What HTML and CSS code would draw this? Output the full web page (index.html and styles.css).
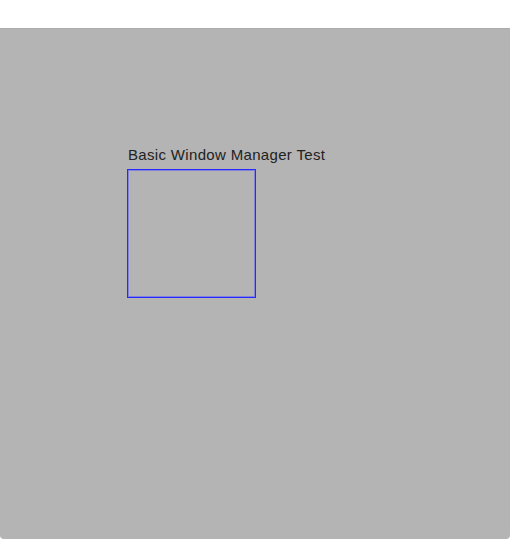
FILE: index.html
```html
<!DOCTYPE html>
<html>
<head>
<meta charset="utf-8">
<link rel="stylesheet" href="styles.css">
</head>
<body>
<div class="desktop">
  <div class="window">
    <div class="title">Basic Window Manager Test</div>
    <div class="frame"></div>
  </div>
</div>
</body>
</html>
```
FILE: styles.css
```css
html, body {
  margin: 0;
  padding: 0;
  background: #ffffff;
}
.desktop {
  margin-top: 28px;
  height: 511px;
  box-sizing: border-box;
  background: #b4b4b4;
  border-top: 1px solid #acacac;
  border-radius: 0 0 4px 4px;
  padding: 117px 0 0 127px;
}
.window {
  display: flex;
  flex-direction: column;
  align-items: flex-start;
  gap: 6px;
}
.title {
  font-family: "Liberation Sans", Arial, sans-serif;
  font-size: 15px;
  letter-spacing: 0.33px;
  line-height: 17px;
  color: #222222;
  padding-left: 1px;
}
.frame {
  width: 127px;
  height: 127px;
  border: 1px solid #2828ff;
  box-shadow: inset 0 0 0 1px rgba(90, 90, 255, 0.55);
}
```
